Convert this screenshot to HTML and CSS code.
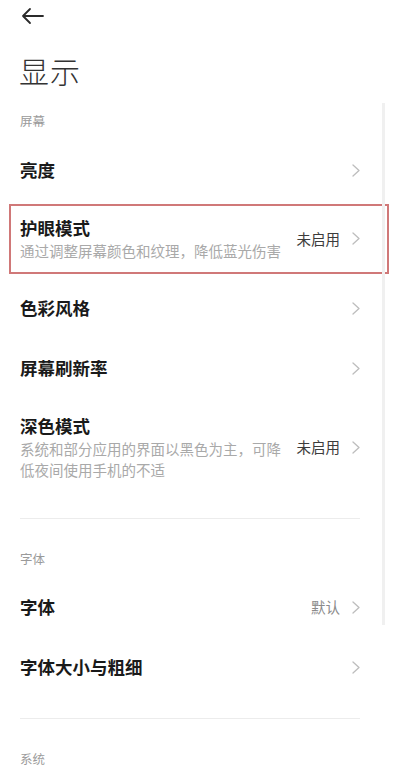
FILE: index.html
```html
<!DOCTYPE html>
<html lang="zh-CN">
<head>
<meta charset="utf-8">
<title>显示</title>
<link rel="stylesheet" href="styles.css">
</head>
<body>
<div class="page">
  <div class="topbar">
    <svg class="back" width="24" height="18" viewBox="0 0 24 18">
      <path d="M22 9H2M9 2L2 9L9 16" fill="none" stroke="#2b2b2b" stroke-width="1.8" stroke-linecap="round" stroke-linejoin="round"/>
    </svg>
  </div>
  <h1 class="title">显示</h1>

  <div class="section-label">屏幕</div>
  <div class="row">
    <div class="text"><div class="name">亮度</div></div>
    <span class="chev"></span>
  </div>
  <div class="row two highlight">
    <div class="text">
      <div class="name">护眼模式</div>
      <div class="desc">通过调整屏幕颜色和纹理，降低蓝光伤害</div>
    </div>
    <span class="value">未启用</span>
    <span class="chev"></span>
  </div>
  <div class="row">
    <div class="text"><div class="name">色彩风格</div></div>
    <span class="chev"></span>
  </div>
  <div class="row">
    <div class="text"><div class="name">屏幕刷新率</div></div>
    <span class="chev"></span>
  </div>
  <div class="row two">
    <div class="text">
      <div class="name">深色模式</div>
      <div class="desc">系统和部分应用的界面以黑色为主，可降低夜间使用手机的不适</div>
    </div>
    <span class="value">未启用</span>
    <span class="chev"></span>
  </div>
  <div class="divider"></div>

  <div class="section-label">字体</div>
  <div class="row">
    <div class="text"><div class="name">字体</div></div>
    <span class="value light">默认</span>
    <span class="chev"></span>
  </div>
  <div class="row">
    <div class="text"><div class="name">字体大小与粗细</div></div>
    <span class="chev"></span>
  </div>
  <div class="divider"></div>

  <div class="section-label">系统</div>

  <div class="scrollbar"></div>
</div>
</body>
</html>
```
FILE: styles.css
```css
* { box-sizing: border-box; }
html, body {
  margin: 0;
  padding: 0;
  background: #ffffff;
}
body {
  font-family: "Noto Sans CJK SC", "Noto Sans", sans-serif;
  color: #1a1a1a;
}
.page {
  position: relative;
  width: 399px;
  height: 773px;
  overflow: hidden;
}
.topbar {
  height: 32px;
  display: flex;
  align-items: center;
  padding-left: 21px;
}
.back { display: block; }
.title {
  margin: 18px 0 0 0;
  padding-left: 19px;
  font-size: 30px;
  line-height: 40px;
  font-weight: 300;
  color: #333333;
  letter-spacing: 1px;
}
.section-label {
  padding: 22px 0 10px 20px;
  font-size: 12.5px;
  line-height: 18px;
  color: #9a9a9a;
}
.divider + .section-label {
  padding-top: 31px;
  padding-bottom: 9px;
}
.row {
  position: relative;
  display: flex;
  align-items: center;
  height: 60px;
  padding: 0 39px 0 20px;
}
.row.two {
  height: auto;
  padding-top: 16px;
  padding-bottom: 17px;
}
.text {
  flex: 1;
  min-width: 0;
}
.name {
  font-size: 17.5px;
  line-height: 24px;
  font-weight: 700;
  color: #1a1a1a;
}
.desc {
  font-size: 14.5px;
  line-height: 21px;
  color: #a9a9a9;
  max-width: 264px;
}
.value {
  margin-left: 12px;
  font-size: 14.5px;
  line-height: 20px;
  color: #3c3c3c;
  white-space: nowrap;
}
.value.light { color: #8a8a8a; }
.chev {
  width: 8px;
  height: 13px;
  margin-left: 12px;
  flex: none;
  background: no-repeat center / 8px 13px url("data:image/svg+xml,%3Csvg xmlns='http://www.w3.org/2000/svg' width='8' height='13' viewBox='0 0 8 13'%3E%3Cpath d='M1 1L7 6.5L1 12' fill='none' stroke='%23bdbdbd' stroke-width='1.3' stroke-linecap='round' stroke-linejoin='round'/%3E%3C/svg%3E");
}
.highlight::after {
  content: "";
  position: absolute;
  left: 9px;
  right: 10px;
  top: 4px;
  bottom: 4px;
  border: 2px solid #d07878;
  pointer-events: none;
}
.divider {
  height: 1px;
  margin: 21px 39px 0 20px;
  background: #ececec;
}
.scrollbar {
  position: absolute;
  left: 382px;
  top: 103px;
  width: 3px;
  height: 522px;
  background: #f0f0f0;
}
```
